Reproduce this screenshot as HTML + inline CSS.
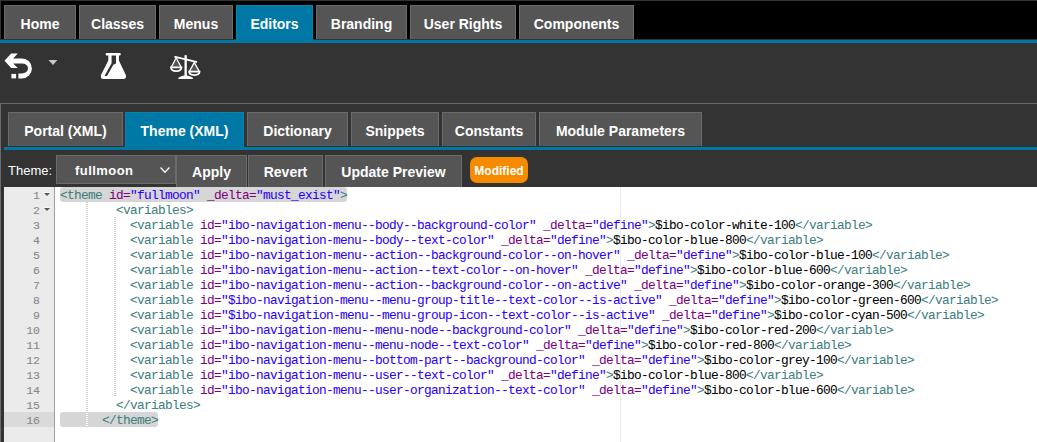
<!DOCTYPE html>
<html><head><meta charset="utf-8">
<style>
*{margin:0;padding:0;box-sizing:border-box}
html,body{width:1037px;height:442px;overflow:hidden;background:#333333;font-family:"Liberation Sans",sans-serif}
.abs{position:absolute}
#topbar{position:absolute;left:1px;top:1px;width:1036px;height:38px;background:#000}
#blue1{position:absolute;left:0;top:40px;width:1037px;height:3px;background:#0078a5}
.tab{position:absolute;top:5px;height:34px;background:#555;border:1px solid #6b6b6b;border-bottom:none;color:#fff;font-weight:bold;font-size:14px;text-align:center;line-height:37px}
.tab.act{background:#0078a5;border-color:#0483b1;height:35px}
#panel{position:absolute;left:0;top:103px;width:1037px;height:339px;border-top:1px solid #6b6b6b;border-left:1px solid #6b6b6b}
.stab{position:absolute;top:112px;height:34px;background:#555;border:1px solid #6b6b6b;border-bottom:none;color:#fff;font-weight:bold;font-size:14px;text-align:center;line-height:37px}
.stab.act{background:#0078a5;border-color:#0483b1;height:35px}
#blue2{position:absolute;left:4px;top:147px;width:1033px;height:3px;background:#0078a5}
.btn{position:absolute;top:155px;height:32px;background:#555;border:1px solid #6b6b6b;border-bottom:none;color:#fff;font-weight:bold;font-size:14px;text-align:center;line-height:33px}
#sel{position:absolute;left:56px;top:155px;width:120px;height:29px;background:#555;border:1px solid #6b6b6b;color:#fff;font-weight:bold;font-size:13px;letter-spacing:0.45px;line-height:29px;padding-left:18px}
#lbl{position:absolute;left:8px;top:156px;height:29px;line-height:29px;color:#fff;font-size:13px}
#mod{position:absolute;left:470px;top:157px;width:58px;height:26px;background:#f68b00;border-radius:7px;color:#fff;font-weight:bold;font-size:12px;text-align:center;line-height:28px}
#editor{position:absolute;left:4px;top:187px;width:1033px;height:255px;background:#fff}
#gutter{position:absolute;left:0;top:0;width:51px;height:255px;background:#ebebeb;border-right:1px solid #9f9f9f}
.ln{position:absolute;left:0;width:36px;height:15px;text-align:right;font-family:"Liberation Mono",monospace;font-size:11.5px;letter-spacing:0px;line-height:15px;color:#888;margin-top:0.5px;-webkit-text-stroke:0.1px}
.code{position:absolute;left:56px;height:15px;font-family:"Liberation Mono",monospace;font-size:12.8px;letter-spacing:-0.68px;line-height:15px;white-space:pre;color:#000;margin-top:1px;-webkit-text-stroke:0.05px}
.t{color:#3f7f7f}.a{color:#7f007f}.s{color:#2a00ff}

.hl{position:absolute;background:#d6d6d6;border-radius:3px;height:15px}
.ig{position:absolute;width:2px;background:repeating-linear-gradient(to bottom,#d0d0d0 0,#d0d0d0 1px,#fff 1px,#fff 2px)}
.fw{position:absolute;left:40px;width:6px;height:4px}
#pm{position:absolute;left:616px;top:0;width:1px;height:255px;background:#ebebeb}
</style></head><body>
<div id="topbar"></div>
<div id="blue1"></div>
<div class="tab" style="left:4px;width:72px">Home</div>
<div class="tab" style="left:79px;width:77px">Classes</div>
<div class="tab" style="left:159px;width:74px">Menus</div>
<div class="tab act" style="left:236px;width:77px">Editors</div>
<div class="tab" style="left:316px;width:91px">Branding</div>
<div class="tab" style="left:410px;width:106px">User Rights</div>
<div class="tab" style="left:519px;width:115px">Components</div>

<svg class="abs" style="left:0;top:43px" width="220" height="60" viewBox="0 43 220 60">
<path fill="#fff" d="M4.5,60.8 L11.2,53.4 L17.8,53.4 L13.1,58.4 L21.9,58.4 A10,10 0 0 1 21.9,78.4 L18.4,78.4 L18.4,73.4 L21.9,73.4 A6.1,5 0 0 0 21.9,63.4 L13.1,63.4 L17.8,68.1 L11.2,68.1 Z"/>
<rect fill="#fff" x="11.4" y="73.9" width="4.7" height="4.5"/>
<path fill="#c8c8c8" d="M48.5,59.9 L57.4,59.9 L52.95,64.9 Z"/>
<path fill="#fff" d="M106.8,53.1 L119.6,53.1 A1.2,1.2 0 0 1 119.6,55.5 L118.9,55.5 L118.9,60.5 L125.8,74.9 Q126.8,79 123.3,79 L103.5,79 Q100,79 101,74.9 L108.3,60.5 L108.3,55.5 L106.8,55.5 A1.2,1.2 0 0 1 106.8,53.1 Z"/>
<path fill="#333" d="M111.6,55.5 L116,55.5 L116,63.4 L113.3,64.8 L107.0,76.0 L104.5,76.0 L111.6,63.2 Z"/>
<path stroke="#fff" stroke-width="2" stroke-linecap="round" fill="none" d="M175.2,56.9 L196.2,61.9"/>
<rect fill="#fff" x="184.5" y="55.2" width="2.3" height="21.5"/>
<path fill="#fff" d="M178.3,79 L192.9,79 L192.9,77.8 Q189.5,75.3 185.6,75.3 Q181.7,75.3 178.3,77.8 Z"/>
<path fill="rgba(255,255,255,0.18)" d="M176.2,58.5 L171.5,67.2 L180.9,67.2 Z M194.3,63 L189.6,71.4 L199,71.4 Z"/>
<path stroke="#fff" stroke-width="1.3" fill="none" d="M171.2,67.4 L176.2,57.8 L181.2,67.4 M189.3,71.6 L194.3,62.4 L199.3,71.6"/>
<path stroke="#fff" stroke-width="1.7" fill="none" d="M170.9,67.3 L181.5,67.3 Q181.5,71.2 176.2,71.2 Q170.9,71.2 170.9,67.3 Z M189.1,71.6 L199.6,71.6 Q199.6,75.1 194.35,75.1 Q189.1,75.1 189.1,71.6 Z"/>
</svg>
<div id="panel"></div>
<div class="stab" style="left:8px;width:115px">Portal (XML)</div>
<div class="stab act" style="left:125px;width:119px">Theme (XML)</div>
<div class="stab" style="left:247px;width:101px">Dictionary</div>
<div class="stab" style="left:351px;width:88px">Snippets</div>
<div class="stab" style="left:442px;width:94px">Constants</div>
<div class="stab" style="left:539px;width:163px">Module Parameters</div>
<div id="blue2"></div>

<div id="lbl">Theme:</div>
<div id="sel">fullmoon</div>
<div class="btn" style="left:176px;width:71px">Apply</div>
<div class="btn" style="left:248px;width:75px">Revert</div>
<div class="btn" style="left:325px;width:137px">Update Preview</div>
<div id="mod">Modified</div>
<svg class="abs" style="left:0;top:150px" width="200" height="37" viewBox="0 150 200 37">
<path stroke="#fff" stroke-width="1.3" fill="none" d="M160.6,167.5 L165,172.2 L169.4,167.5"/>
</svg>


<div id="editor">
<div id="gutter"></div>
<div id="pm"></div>
<div class="hl" style="left:56px;top:0;width:287px"></div>
<div class="hl" style="left:56px;top:225px;width:98px"></div>
<div style="position:absolute;left:0;top:225px;width:50px;height:15px;background:#dadada"></div>
<div class="ig" style="left:82px;top:15px;height:225px"></div>
<div class="ig" style="left:110px;top:30px;height:180px"></div>
<div class="ln" style="top:0px">1</div>
<div class="code" style="top:0px"><span class="t">&lt;theme</span> <span class="a">id=</span><span class="s">"fullmoon"</span> <span class="a">_delta=</span><span class="s">"must_exist"</span><span class="t">&gt;</span></div>
<div class="ln" style="top:15px">2</div>
<div class="code" style="top:15px">        <span class="t">&lt;variables</span><span class="t">&gt;</span></div>
<div class="ln" style="top:30px">3</div>
<div class="code" style="top:30px">          <span class="t">&lt;variable</span> <span class="a">id=</span><span class="s">"ibo-navigation-menu--body--background-color"</span> <span class="a">_delta=</span><span class="s">"define"</span><span class="t">&gt;</span>$ibo-color-white-100<span class="t">&lt;/variable</span><span class="t">&gt;</span></div>
<div class="ln" style="top:45px">4</div>
<div class="code" style="top:45px">          <span class="t">&lt;variable</span> <span class="a">id=</span><span class="s">"ibo-navigation-menu--body--text-color"</span> <span class="a">_delta=</span><span class="s">"define"</span><span class="t">&gt;</span>$ibo-color-blue-800<span class="t">&lt;/variable</span><span class="t">&gt;</span></div>
<div class="ln" style="top:60px">5</div>
<div class="code" style="top:60px">          <span class="t">&lt;variable</span> <span class="a">id=</span><span class="s">"ibo-navigation-menu--action--background-color--on-hover"</span> <span class="a">_delta=</span><span class="s">"define"</span><span class="t">&gt;</span>$ibo-color-blue-100<span class="t">&lt;/variable</span><span class="t">&gt;</span></div>
<div class="ln" style="top:75px">6</div>
<div class="code" style="top:75px">          <span class="t">&lt;variable</span> <span class="a">id=</span><span class="s">"ibo-navigation-menu--action--text-color--on-hover"</span> <span class="a">_delta=</span><span class="s">"define"</span><span class="t">&gt;</span>$ibo-color-blue-600<span class="t">&lt;/variable</span><span class="t">&gt;</span></div>
<div class="ln" style="top:90px">7</div>
<div class="code" style="top:90px">          <span class="t">&lt;variable</span> <span class="a">id=</span><span class="s">"ibo-navigation-menu--action--background-color--on-active"</span> <span class="a">_delta=</span><span class="s">"define"</span><span class="t">&gt;</span>$ibo-color-orange-300<span class="t">&lt;/variable</span><span class="t">&gt;</span></div>
<div class="ln" style="top:105px">8</div>
<div class="code" style="top:105px">          <span class="t">&lt;variable</span> <span class="a">id=</span><span class="s">"$ibo-navigation-menu--menu-group-title--text-color--is-active"</span> <span class="a">_delta=</span><span class="s">"define"</span><span class="t">&gt;</span>$ibo-color-green-600<span class="t">&lt;/variable</span><span class="t">&gt;</span></div>
<div class="ln" style="top:120px">9</div>
<div class="code" style="top:120px">          <span class="t">&lt;variable</span> <span class="a">id=</span><span class="s">"$ibo-navigation-menu--menu-group-icon--text-color--is-active"</span> <span class="a">_delta=</span><span class="s">"define"</span><span class="t">&gt;</span>$ibo-color-cyan-500<span class="t">&lt;/variable</span><span class="t">&gt;</span></div>
<div class="ln" style="top:135px">10</div>
<div class="code" style="top:135px">          <span class="t">&lt;variable</span> <span class="a">id=</span><span class="s">"ibo-navigation-menu--menu-node--background-color"</span> <span class="a">_delta=</span><span class="s">"define"</span><span class="t">&gt;</span>$ibo-color-red-200<span class="t">&lt;/variable</span><span class="t">&gt;</span></div>
<div class="ln" style="top:150px">11</div>
<div class="code" style="top:150px">          <span class="t">&lt;variable</span> <span class="a">id=</span><span class="s">"ibo-navigation-menu--menu-node--text-color"</span> <span class="a">_delta=</span><span class="s">"define"</span><span class="t">&gt;</span>$ibo-color-red-800<span class="t">&lt;/variable</span><span class="t">&gt;</span></div>
<div class="ln" style="top:165px">12</div>
<div class="code" style="top:165px">          <span class="t">&lt;variable</span> <span class="a">id=</span><span class="s">"ibo-navigation-menu--bottom-part--background-color"</span> <span class="a">_delta=</span><span class="s">"define"</span><span class="t">&gt;</span>$ibo-color-grey-100<span class="t">&lt;/variable</span><span class="t">&gt;</span></div>
<div class="ln" style="top:180px">13</div>
<div class="code" style="top:180px">          <span class="t">&lt;variable</span> <span class="a">id=</span><span class="s">"ibo-navigation-menu--user--text-color"</span> <span class="a">_delta=</span><span class="s">"define"</span><span class="t">&gt;</span>$ibo-color-blue-800<span class="t">&lt;/variable</span><span class="t">&gt;</span></div>
<div class="ln" style="top:195px">14</div>
<div class="code" style="top:195px">          <span class="t">&lt;variable</span> <span class="a">id=</span><span class="s">"ibo-navigation-menu--user-organization--text-color"</span> <span class="a">_delta=</span><span class="s">"define"</span><span class="t">&gt;</span>$ibo-color-blue-600<span class="t">&lt;/variable</span><span class="t">&gt;</span></div>
<div class="ln" style="top:210px">15</div>
<div class="code" style="top:210px">        <span class="t">&lt;/variables</span><span class="t">&gt;</span></div>
<div class="ln" style="top:225px">16</div>
<div class="code" style="top:225px">      <span class="t">&lt;/theme</span><span class="t">&gt;</span></div>
<svg style="position:absolute;left:0;top:0" width="51" height="40"><path d="M39.2,5.3 L46.8,5.3 L43,9.6 Z" fill="#fff" opacity="0.8"/><path d="M40,5.9 L46,5.9 L43,8.9 Z" fill="#555"/><path d="M39.2,20.3 L46.8,20.3 L43,24.6 Z" fill="#fff" opacity="0.8"/><path d="M40,20.9 L46,20.9 L43,23.9 Z" fill="#555"/></svg>
</div>
</body></html>
